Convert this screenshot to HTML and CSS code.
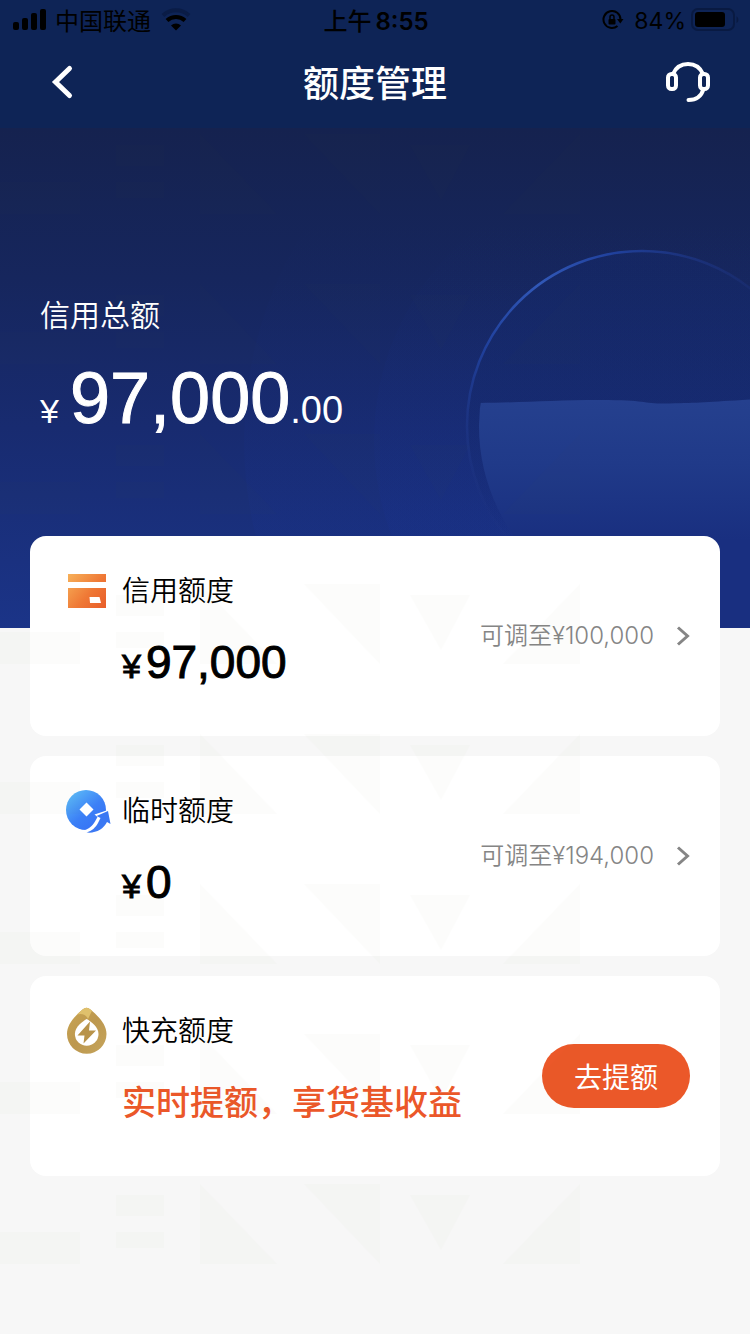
FILE: index.html
```html
<!DOCTYPE html>
<html lang="zh-CN">
<head>
<meta charset="utf-8">
<meta name="viewport" content="width=device-width, initial-scale=1">
<title>额度管理</title>
<link rel="stylesheet" href="styles.css">
</head>
<body>
<div class="page">
  <header class="header">
    <div class="status">
      <div class="status-left">
        <svg class="signal" width="34" height="22" viewBox="0 0 34 22" aria-hidden="true"><rect x="0" y="13" width="6" height="8" rx="2"/><rect x="9" y="9" width="6" height="12" rx="2"/><rect x="18" y="4" width="6" height="17" rx="2"/><rect x="27" y="0" width="6" height="21" rx="2"/></svg>
        <span class="carrier">中国联通</span>
        <svg width="30" height="24" viewBox="0 0 30 24" fill="none" aria-hidden="true"><path d="M2 7.500a19 19 0 0 1 26 0" stroke="#0a1c46" stroke-width="4"/><path d="M6 12.500a13 13 0 0 1 18 0" stroke="#000" stroke-width="4"/><path d="M10 17.500a7.500 7.500 0 0 1 10 0L15 22.500z" fill="#000"/></svg>
      </div>
      <div class="time">上午<b>8:55</b></div>
      <div class="status-right">
        <svg width="22" height="20" viewBox="0 0 22 20" fill="none" aria-hidden="true"><path d="M18.500 9.500A8.500 8.500 0 1 0 15.500 16" stroke="#000" stroke-width="2"/><path d="M15 9h6.500l-3.200 4.500z" fill="#000"/><rect x="6.500" y="9" width="7" height="5.500" rx="1" fill="#000"/><path d="M8 9V7a2 2 0 0 1 4 0v2" stroke="#000" stroke-width="1.500"/></svg>
        <span class="percent">84%</span>
        <svg width="48" height="24" viewBox="0 0 48 24" fill="none" aria-hidden="true"><rect x="1" y="1" width="42" height="21" rx="6" stroke="#091a42" stroke-width="2"/><rect x="4" y="4" width="30" height="15" rx="3" fill="#000"/><path d="M45.500 8.500c2.500 1 2.500 5.500 0 6.500z" fill="#091a42"/></svg>
      </div>
    </div>
    <nav class="nav">
      <button class="icon-button" type="button" aria-label="返回"><svg width="44" height="44" viewBox="0 0 44 44" fill="none"><path d="M29.500 8.500 15.500 22l14 13.500" stroke="#fff" stroke-width="5" stroke-linecap="round" stroke-linejoin="miter"/></svg></button>
      <h1 class="title">额度管理</h1>
      <button class="icon-button" type="button" aria-label="客服"><svg width="44" height="44" viewBox="0 0 44 44" fill="none" stroke="#fff" stroke-width="4" stroke-linecap="round"><rect x="2" y="14" width="8" height="15" rx="3.500"/><rect x="34" y="14" width="8" height="15" rx="3.500"/><path d="M7 14C10 7 15.500 4 22 4S34 7 37 14"/><path d="M37.500 29c-2 7-7 11-15 11"/></svg></button>
    </nav>
  </header>

  <section class="hero">
    <svg class="globe" width="750" height="500" viewBox="0 128 750 500" aria-hidden="true">
      <defs>
        <radialGradient id="shine" gradientUnits="userSpaceOnUse" cx="540" cy="285" r="235">
          <stop offset="0" stop-color="#3158b8"/><stop offset=".35" stop-color="#2143a2" stop-opacity=".9"/><stop offset=".65" stop-color="#213c92" stop-opacity=".5"/><stop offset="1" stop-color="#24398a" stop-opacity=".1"/>
        </radialGradient>
        <linearGradient id="water" gradientUnits="userSpaceOnUse" x1="0" y1="400" x2="0" y2="540">
          <stop offset="0" stop-color="#25408e"/><stop offset=".45" stop-color="#203a89"/><stop offset="1" stop-color="#192f80"/>
        </linearGradient>
        <linearGradient id="halo" gradientUnits="userSpaceOnUse" x1="0" y1="220" x2="0" y2="520">
          <stop offset="0" stop-color="#1834a0" stop-opacity="0"/><stop offset="1" stop-color="#1834a0" stop-opacity=".1"/>
        </linearGradient>
        <linearGradient id="glass" gradientUnits="userSpaceOnUse" x1="0" y1="400" x2="0" y2="540">
          <stop offset="0" stop-color="#14296c" stop-opacity=".4"/><stop offset="1" stop-color="#14296c" stop-opacity="0"/>
        </linearGradient>
        <clipPath id="bowl"><path d="M479 426a171 171 0 0 1 342 0V628H595C520 560 479 500 479 426z"/></clipPath>
      </defs>
      <circle cx="642" cy="440" r="398" fill="url(#halo)"/>
      <circle cx="642" cy="440" r="268" fill="url(#halo)"/>
      <circle cx="642" cy="426" r="176" fill="url(#glass)"/>
      <circle cx="642" cy="426" r="175" fill="none" stroke="url(#shine)" stroke-width="2.500"/>
      <path clip-path="url(#bowl)" d="M470 403C520 403 550 400 600 400S640 404 670 403.500 710 402 760 399V628H470z" fill="url(#water)"/>
    </svg>
    <h2 class="hero-label">信用总额</h2>
    <p class="hero-amount"><span class="hero-yen">¥</span><span class="hero-number">97,000</span><span class="hero-cents">.00</span></p>
  </section>

  <main class="cards">
    <article class="card">
      <div class="card-icon"><svg width="46" height="48" viewBox="0 0 46 48" aria-hidden="true"><defs><linearGradient id="orange" gradientUnits="userSpaceOnUse" x1="3" y1="6" x2="40" y2="38"><stop offset="0" stop-color="#f7b25a"/><stop offset=".6" stop-color="#ef7835"/><stop offset="1" stop-color="#e9602b"/></linearGradient></defs><path fill="url(#orange)" d="M3 7h38v8H3zM3 21h38v20H3z"/><path fill="#fff" d="M24.500 30h10l1.500 6H25z"/></svg></div>
      <div class="card-body">
        <h3 class="card-title">信用额度</h3>
        <p class="amount"><span class="yen">¥</span>97,000</p>
      </div>
      <a class="adjust" href="#credit">可调至¥100,000<svg width="14" height="22" viewBox="0 0 14 22" fill="none" aria-hidden="true"><path d="M2 2.500 11.500 11 2 19.500" stroke="#858585" stroke-width="3"/></svg></a>
    </article>

    <article class="card">
      <div class="card-icon"><svg width="46" height="48" viewBox="0 0 46 48" aria-hidden="true"><defs><linearGradient id="blue" gradientUnits="userSpaceOnUse" x1="5" y1="6" x2="34" y2="42"><stop offset="0" stop-color="#5bb9f8"/><stop offset=".55" stop-color="#3c80f6"/><stop offset="1" stop-color="#3670f5"/></linearGradient></defs><circle cx="21" cy="23" r="20" fill="url(#blue)"/><path d="m21.500 15.500 7 7-7 7-7-7z" fill="#fff"/><path d="M46 22 29.500 27.500l3 2.500-2.500 4.500c-3 5-6 7-10 8.500V46l6 2 20-10z" fill="#fff"/><path d="M43 24 45.500 37l-3.500-2C38.500 42 31 46.500 21.500 45.500c5.500-1.500 9-5 11.500-9.500l2.500-5-4-2z" fill="#3b78f3"/></svg></div>
      <div class="card-body">
        <h3 class="card-title">临时额度</h3>
        <p class="amount"><span class="yen">¥</span>0</p>
      </div>
      <a class="adjust" href="#temporary">可调至¥194,000<svg width="14" height="22" viewBox="0 0 14 22" fill="none" aria-hidden="true"><path d="M2 2.500 11.500 11 2 19.500" stroke="#858585" stroke-width="3"/></svg></a>
    </article>

    <article class="card">
      <div class="card-icon"><svg width="46" height="48" viewBox="0 0 46 48" aria-hidden="true"><defs><linearGradient id="gold" x1="0" y1="0" x2="1" y2="1"><stop offset="0" stop-color="#c9a552"/><stop offset=".5" stop-color="#bd984f"/><stop offset="1" stop-color="#c5a45b"/></linearGradient></defs><path fill="url(#gold)" d="M17.500 2.500q4-3.500 8 0C33 9 41.500 17 41.500 27a19.700 19.700 0 0 1-39.500 0C2 17 10 9 17.500 2.500z"/><path fill="#dfc06c" d="M17.500 2.500 12 7.500q8-2 11 4.500l4-8.200-1.500-1.300q-4-3.500-8 0z"/><path fill="#fff" d="M21.700 12C26 14.500 33.500 20 33.500 27a11.800 11.800 0 0 1-23.600 0c0-7 7.500-12.500 11.800-15z"/><path fill="#b8934a" d="M25 14.500 12.500 28.500h7L18.500 36.500 31 23.500H24z"/></svg></div>
      <div class="card-body">
        <h3 class="card-title">快充额度</h3>
        <p class="promo">实时提额，享货基收益</p>
      </div>
      <button class="raise" type="button">去提额</button>
    </article>
  </main>

  <svg class="watermark" aria-hidden="true">
    <defs><pattern id="marks" patternUnits="userSpaceOnUse" width="750" height="150"><path d="M0 48h80v32H0zM116 11h48v21h-48zM116 48h48v16h-48zM200 0v80h77zM304 0h76v80zM410 11h60l-29 55zM580 0v80h-77z"/></pattern></defs>
    <rect width="100%" height="100%" fill="url(#marks)"/>
  </svg>
</div>
</body>
</html>
```

FILE: styles.css
```css
* { box-sizing: border-box; }

body {
  margin: 0;
  background: #f7f7f7;
  font-family: "Liberation Sans", "Noto Sans CJK SC", sans-serif;
  color: #000;
}

h1, h2, h3, p { margin: 0; font-weight: 400; }

button { border: 0; padding: 0; cursor: pointer; }

.page { position: relative; min-height: 100vh; }

.header { background: #0e2456; }

.status {
  display: grid;
  grid-template-columns: 1fr auto 1fr;
  align-items: center;
  height: 40px;
  padding: 0 11px 0 13px;
  font-family: Inter, "Noto Sans CJK SC", sans-serif;
  font-size: 24px;
  line-height: 36px;
}

.status-left, .status-right { display: flex; align-items: center; }
.status-left { gap: 8px; }
.status-right { gap: 5px; justify-content: flex-end; }
.signal { fill: #000; }
.carrier { margin-right: 2px; padding-top: 4px; }
.time { display: flex; gap: 4px; padding-top: 4px; font-weight: 500; }
.time b { font-weight: 600; }
.percent { margin-left: 5px; padding-top: 2px; font-size: 23px; }

.nav {
  display: flex;
  align-items: center;
  justify-content: space-between;
  height: 88px;
  padding: 0 40px 4px;
}

.icon-button { display: flex; background: none; }
.title {
  padding-bottom: 2px;
  color: #fff;
  font-family: "Noto Sans CJK SC", sans-serif;
  font-size: 36px;
  font-weight: 500;
  line-height: 44px;
}

.hero {
  position: relative;
  overflow: hidden;
  padding: 164px 40px 188px;
  background: linear-gradient(#15224f, #16265d 30%, #182b70 60%, #1b3488);
  color: #fff;
}

.globe { position: absolute; top: 0; right: 0; }
.hero-label {
  position: relative;
  font-size: 30px;
  font-weight: 350;
  line-height: 48px;
}

.hero-amount {
  position: relative;
  display: flex;
  align-items: baseline;
  height: 84px;
  margin-top: 16px;
  line-height: 84px;
}

.hero-yen { width: 30px; font-size: 34px; }
.hero-number { font-size: 72px; -webkit-text-stroke: 1px; }
.hero-cents { font-size: 38px; }

.cards {
  position: relative;
  display: flex;
  flex-direction: column;
  gap: 20px;
  margin-top: -92px;
  padding: 0 30px 158px;
}

.card {
  display: flex;
  align-items: center;
  min-height: 200px;
  padding: 30px;
  border-radius: 16px;
  background: #fff;
}

.card-icon { align-self: flex-start; width: 62px; padding: 1px 0 0 5px; }
.card-icon svg { display: block; }
.card-body { flex: 1; align-self: flex-start; }
.card-title { font-size: 28px; font-weight: 350; line-height: 52px; }

.amount {
  display: flex;
  align-items: baseline;
  gap: 5px;
  margin-top: 14px;
  font-size: 46px;
  line-height: 60px;
  -webkit-text-stroke: 1px;
}

.yen { font-size: 34px; }

.promo {
  margin-top: 19px;
  color: #eb5729;
  font-family: "Noto Sans CJK SC", sans-serif;
  font-size: 34px;
  font-weight: 500;
  line-height: 48px;
}

.adjust {
  display: flex;
  align-items: center;
  gap: 22px;
  color: #858585;
  font-family: Inter, "Noto Sans CJK SC", sans-serif;
  font-size: 24px;
  font-weight: 350;
  line-height: 36px;
  text-decoration: none;
}

.raise {
  width: 148px;
  height: 64px;
  border-radius: 32px;
  background: #eb5829;
  color: #fff;
  font-family: "Noto Sans CJK SC", sans-serif;
  font-size: 28px;
}

.watermark {
  position: absolute;
  top: 134px;
  left: 0;
  width: 100%;
  height: calc(100% - 204px);
  fill: rgb(110, 120, 40);
  opacity: 0.01;
  pointer-events: none;
}
```
